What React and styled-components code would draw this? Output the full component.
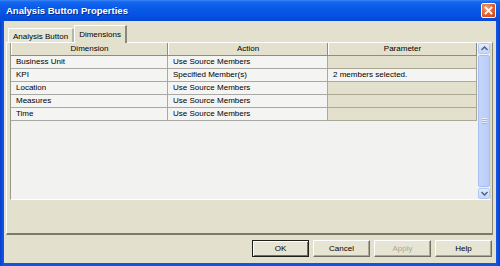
import React from "react";
import styled, { createGlobalStyle } from "styled-components";

const GlobalStyle = createGlobalStyle`
    html, body {
        margin: 0;
        padding: 0;
        background: #ffffff;
    }
    body {
        font-family: "Liberation Sans", Arial, sans-serif;
        font-size: 8px;
    }
`;

const rows = [
    { dimension: "Business Unit", action: "Use Source Members", parameter: "" },
    { dimension: "KPI", action: "Specified Member(s)", parameter: "2 members selected.", editable: true },
    { dimension: "Location", action: "Use Source Members", parameter: "" },
    { dimension: "Measures", action: "Use Source Members", parameter: "" },
    { dimension: "Time", action: "Use Source Members", parameter: "" },
];

const buttons = [
    { label: "OK", isDefault: true },
    { label: "Cancel" },
    { label: "Apply", disabled: true },
    { label: "Help" },
];

function App() {
    return (
        <>
            <GlobalStyle />
            <Window>
                <TitleBar>
                    <Title>Analysis Button Properties</Title>
                    <CloseButton>
                        <svg width="9" height="9" viewBox="0 0 9 9">
                            <path d="M1.5 1.5 L7.5 7.5 M7.5 1.5 L1.5 7.5" stroke="#fff" strokeWidth="1.8" strokeLinecap="square" />
                        </svg>
                    </CloseButton>
                </TitleBar>
                <Client>
                    <TabStrip>
                        <Tab>Analysis Button</Tab>
                        <Tab active>Dimensions</Tab>
                    </TabStrip>
                    <Panel>
                        <Grid>
                            <Table>
                                <HeaderRow>
                                    <HeaderCell width={157}>Dimension</HeaderCell>
                                    <HeaderCell width={160}>Action</HeaderCell>
                                    <HeaderCell width={149}>Parameter</HeaderCell>
                                </HeaderRow>
                                {rows.map((r) => (
                                    <Row key={r.dimension}>
                                        <Cell width={157}>{r.dimension}</Cell>
                                        <Cell width={160}>{r.action}</Cell>
                                        <Cell width={149} readOnly={!r.editable}>
                                            {r.parameter}
                                        </Cell>
                                    </Row>
                                ))}
                            </Table>
                            <ScrollBar>
                                <ArrowButton>
                                    <svg width="7" height="5" viewBox="0 0 7 5">
                                        <path d="M0.5 4 L3.5 1 L6.5 4" fill="none" stroke="#4d6185" strokeWidth="1.5" />
                                    </svg>
                                </ArrowButton>
                                <Thumb>
                                    <Grip />
                                </Thumb>
                                <ArrowButton>
                                    <svg width="7" height="5" viewBox="0 0 7 5">
                                        <path d="M0.5 1 L3.5 4 L6.5 1" fill="none" stroke="#4d6185" strokeWidth="1.5" />
                                    </svg>
                                </ArrowButton>
                            </ScrollBar>
                        </Grid>
                    </Panel>
                    <ButtonRow>
                        {buttons.map((b) => (
                            <DialogButton key={b.label} isDefault={b.isDefault} disabled={b.disabled}>
                                {b.label}
                            </DialogButton>
                        ))}
                    </ButtonRow>
                </Client>
            </Window>
        </>
    );
}

const Window = styled.div`
    width: 500px;
    height: 266px;
    box-sizing: border-box;
    display: flex;
    flex-direction: column;
    background: linear-gradient(90deg, #0a3ccc 0, #0f55e4 3px, #0f55e4 497px, #0a3ccc 100%);
    overflow: hidden;
`;

const TitleBar = styled.div`
    height: 21px;
    flex-shrink: 0;
    display: flex;
    align-items: center;
    justify-content: space-between;
    padding: 0 4px 0 6px;
    background: linear-gradient(180deg, #3b85f5 0, #1466ee 2px, #0a5ae8 8px, #0652e2 15px, #0348d6 100%);
`;

const Title = styled.span`
    color: #ffffff;
    font-weight: bold;
    font-size: 9.5px;
    text-shadow: 1px 1px 0 #0a2c8a;
`;

const CloseButton = styled.div`
    width: 15px;
    height: 15px;
    box-sizing: border-box;
    border: 1px solid #ffffff;
    border-radius: 2px;
    background: radial-gradient(circle at 35% 30%, #f0a080 0, #e0602e 55%, #c8401a 100%);
    display: flex;
    align-items: center;
    justify-content: center;
`;

const Client = styled.div`
    flex: 1;
    margin: 0 4px 3px 4px;
    background: #e3e1ce;
    display: flex;
    flex-direction: column;
    padding: 4px 3px 0 2px;
`;

const TabStrip = styled.div`
    height: 17px;
    display: flex;
    align-items: flex-end;
    padding-left: 2px;
    position: relative;
    z-index: 1;
`;

const Tab = styled.div`
    height: ${(p) => (p.active ? 18 : 14)}px;
    box-sizing: border-box;
    padding: ${(p) => (p.active ? "3px 4px 0 4px" : "2px 4px 0 4px")};
    margin-bottom: ${(p) => (p.active ? -1 : 0)}px;
    background: ${(p) => (p.active ? "#e3e1ce" : "#e6e4d2")};
    border-top: 1px solid #ffffff;
    border-left: 1px solid #ffffff;
    border-right: 2px solid ${(p) => (p.active ? "#8a887a" : "#b8b6a6")};
    font-size: 8px;
    color: #000;
    line-height: 11px;
    white-space: nowrap;
`;

const Panel = styled.div`
    height: 193px;
    box-sizing: border-box;
    border-top: 1px solid #ffffff;
    border-left: 1px solid #ffffff;
    border-right: 1px solid #8a887a;
    border-bottom: 2px solid #7c7a6c;
    padding: 0 1px 33px 3px;
    display: flex;
`;

const Grid = styled.div`
    flex: 1;
    display: flex;
    border-left: 1px solid #9a988a;
    border-bottom: 1px solid #ffffff;
    border-right: 1px solid #d8d6c4;
    background: #f2f2f0;
`;

const Table = styled.div`
    width: 466px;
    display: flex;
    flex-direction: column;
`;

const HeaderRow = styled.div`
    display: flex;
    height: 13px;
    box-sizing: border-box;
    background: #e3e1ce;
    border-bottom: 1px solid #8e8c7c;
`;

const HeaderCell = styled.div`
    width: ${(p) => p.width}px;
    box-sizing: border-box;
    text-align: center;
    line-height: 12px;
    border-right: 1px solid #8e8c7c;
    border-left: 1px solid #ffffff;
    font-size: 8px;
    color: #000;
`;

const Row = styled.div`
    display: flex;
    height: 13px;
    box-sizing: border-box;
`;

const Cell = styled.div`
    width: ${(p) => p.width}px;
    box-sizing: border-box;
    padding-left: 5px;
    line-height: 12px;
    white-space: nowrap;
    overflow: hidden;
    font-size: 8px;
    color: #000;
    background: ${(p) => (p.readOnly ? "#e3e1ce" : "#f4f4f2")};
    border-right: 1px solid ${(p) => (p.readOnly ? "#aaa895" : "#a8a8a4")};
    border-bottom: 1px solid ${(p) => (p.readOnly ? "#aaa895" : "#a8a8a4")};
`;

const ScrollBar = styled.div`
    width: 12px;
    margin-left: 1px;
    display: flex;
    flex-direction: column;
    background: #eef0f8;
`;

const ArrowButton = styled.div`
    height: 11px;
    flex-shrink: 0;
    box-sizing: border-box;
    border: 1px solid #b4c8f6;
    border-radius: 2px;
    background: linear-gradient(180deg, #e4ecfd 0, #c5d6fb 100%);
    display: flex;
    align-items: center;
    justify-content: center;
`;

const Thumb = styled.div`
    flex: 1;
    margin: 1px 0;
    box-sizing: border-box;
    border: 1px solid #a8bdf2;
    border-radius: 2px;
    background: linear-gradient(90deg, #c6d6fb 0, #b8ccf8 100%);
    display: flex;
    align-items: center;
    justify-content: center;
`;

const Grip = styled.div`
    width: 5px;
    height: 6px;
    background: repeating-linear-gradient(180deg, #e8eefd 0, #e8eefd 1px, #9fb4ea 1px, #9fb4ea 2px);
`;

const ButtonRow = styled.div`
    display: flex;
    justify-content: flex-end;
    gap: 4px;
    padding: 5px 1px 0 0;
`;

const DialogButton = styled.div`
    width: 57px;
    height: 17px;
    box-sizing: border-box;
    border: 1px solid;
    border-color: ${(p) => (p.isDefault ? "#1e1e1a" : "#ffffff #716f64 #716f64 #ffffff")};
    box-shadow: ${(p) => (p.isDefault ? "inset 1px 1px 0 #ffffff, inset -1px -1px 0 #716f64" : "inset -1px -1px 0 #aca899")};
    background: #e6e4d2;
    text-align: center;
    line-height: 15px;
    font-size: 8px;
    color: ${(p) => (p.disabled ? "#aca899" : "#000")};
`;

export default App;
